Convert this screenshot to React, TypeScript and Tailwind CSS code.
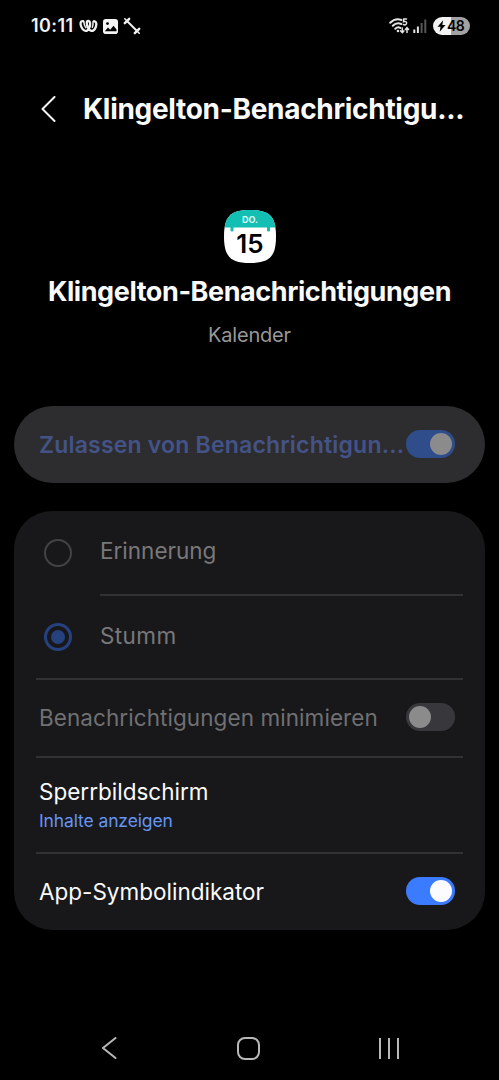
import type { ReactNode } from "react";
import { clsx } from "clsx";

function StatusBar() {
  return (
    <div className="flex h-[52px] items-center justify-between pr-[29px] pl-[31px]">
      <div className="flex items-center">
        <span className="w-[43px] text-[18px] leading-6 font-semibold tracking-[0.4px] whitespace-nowrap text-[#f2f2f2]">
          10:11
        </span>
        <svg width="19" height="14" viewBox="0 0 19 14" className="ml-[5px]" fill="none" stroke="#f0f0f0" strokeLinecap="round" strokeLinejoin="round">
          <path d="M4.200 2.200C1 1.600 1 5.200 2.500 8.200c1.400 2.800 3.800 4.600 5.800 3.300 2.200-1.500 3.200-5.500 2.700-7.900C10.600 1.300 7.600 1.400 7.800 4.300c.2 2.600 1.600 6 3.700 7.200 2.200 1.200 4.300-.7 5.300-3.500.9-2.600.9-5.300-1.700-5.800" strokeWidth="2.300" />
          <path d="M4.800 2.600c.1 2.400.7 4.300 2 6M14 2.600c.2 2.400 0 4-.7 5.700" strokeWidth="1.500" />
        </svg>
        <svg width="15" height="15" viewBox="0 0 15 15" className="ml-[5px]">
          <rect width="15" height="15" rx="2.800" fill="#f4f4f4" />
          <path d="M1.800 12.300 5 8.600l2.200 2.200 3.300-4 3 3.800v1.700Z" fill="#000" />
          <circle cx="4.500" cy="4.600" r="1.400" fill="#000" />
        </svg>
        <svg width="18" height="18" viewBox="0 0 18 18" className="ml-[5px]" fill="none" stroke="#f0f0f0" strokeLinecap="round">
          <path d="m4 4 10 10" strokeWidth="2" />
          <path d="M1.800 6.200 6.200 1.800M11.800 16.200l4.400-4.400" strokeWidth="2.400" />
          <path d="m1.800 1.800 2 2M14.200 14.200l2 2" strokeWidth="1.600" />
        </svg>
      </div>

      <div className="flex items-center">
        <svg width="22" height="18" viewBox="0 0 22 18" fill="none" stroke="#e4e4e4" strokeLinecap="round">
          <path d="M1.200 5.800C4.500 2.400 9 1.700 12.500 3M3.800 8.800c2.500-2.500 5.500-3 8.500-1.800M6.300 11.700c1.500-1.500 3.500-1.700 5-.8" strokeWidth="2" />
          <circle cx="9" cy="14" r="1.300" fill="#e4e4e4" stroke="none" />
          <path d="M17.500 2h-2.700l-.3 2.700c2-.6 3.300 0 3.100 1.600-.1 1.500-1.900 2-3.300 1.200" strokeWidth="1.500" />
          <path d="M13.300 11v4.500m-1.600-1.600 1.600 1.700 1.600-1.700M18 15.500V10.800m-1.600 1.600L18 10.700l1.600 1.700" strokeWidth="1.500" />
        </svg>
        <svg width="14" height="14" viewBox="0 0 14 14" className="ml-[2px]">
          <path d="M.3 10.500h2V14h-2zM3.900 7.500h2V14h-2z" fill="#e4e4e4" />
          <path d="M7.600 4h2v10h-2zM11.300.5h2V14h-2z" fill="#555" />
        </svg>
        <div className="ml-[6px] flex h-[18px] w-[37px] items-center rounded-full bg-linear-to-r from-[#f2f2f2] from-48% to-[#a2a2a2] to-48% pl-[4px]">
          <svg width="9" height="12" viewBox="0 0 9 12">
            <path d="M6.200.3.500 6.800h3L2.700 11.700 8.500 5H5.300Z" fill="#000" />
          </svg>
          <span className="ml-[1px] text-[14px] leading-[18px] font-semibold tracking-[-0.6px] text-black">48</span>
        </div>
      </div>
    </div>
  );
}

function CalendarIcon() {
  return (
    <svg width="52" height="53" viewBox="0 0 52 53">
      <clipPath id="calendar-shape">
        <path d="M26 0C45.500 0 52 6.500 52 26.500S45.500 53 26 53 0 46.500 0 26.500 6.500 0 26 0Z" />
      </clipPath>
      <g clipPath="url(#calendar-shape)">
        <rect width="52" height="53" fill="#fff" />
        <rect width="52" height="17.500" fill="#12bfb2" />
        <rect x="6.500" y="15" width="3" height="6.500" rx="1.300" fill="#12bfb2" />
        <rect x="43" y="15" width="3" height="6.500" rx="1.300" fill="#12bfb2" />
      </g>
      <text x="26" y="13" textAnchor="middle" fontSize="9" fontWeight="700" fill="#dffaf6">
        DO.
      </text>
      <text x="26" y="42.500" textAnchor="middle" fontSize="26" fontWeight="600" fill="#000">
        15
      </text>
    </svg>
  );
}

function Toggle({ on, disabled }: { on?: boolean; disabled?: boolean }) {
  return (
    <div
      className={clsx(
        "mb-0.5 flex h-7 w-[49px] shrink-0 items-center rounded-full px-[3px]",
        on ? "justify-end" : "justify-start",
        on && (disabled ? "bg-[#304d8b]" : "bg-[#3b7bff]"),
        !on && "bg-[#38373c]",
      )}
    >
      <div className={clsx("size-[22px] rounded-full", disabled ? "bg-[#8b8b8b]" : "bg-[#fcfcff]")} />
    </div>
  );
}

function Radio({ checked }: { checked?: boolean }) {
  return (
    <div
      className={clsx(
        "flex size-7 shrink-0 items-center justify-center rounded-full",
        checked ? "border-3 border-[#25427f]" : "border-2 border-[#434345]",
      )}
    >
      {checked && <div className="size-3.5 rounded-full bg-[#25427f]" />}
    </div>
  );
}

function Row({ className, children }: { className?: string; children: ReactNode }) {
  return <div className={clsx("flex items-center", className)}>{children}</div>;
}

function Divider({ inset }: { inset?: boolean }) {
  return <div className={clsx("mr-[22px] h-0.5 bg-[#323234]", inset ? "ml-[86px]" : "ml-[22px]")} />;
}

export default function App() {
  return (
    <div className="flex h-[1080px] w-[499px] flex-col overflow-hidden bg-black font-[Inter,sans-serif] text-[#fafafa]">
      <StatusBar />

      <header className="flex h-[114px] items-center pl-[41px]">
        <svg width="15" height="26" viewBox="0 0 15 26" fill="none" stroke="#f4f4f4" strokeWidth="2" strokeLinecap="round" strokeLinejoin="round">
          <path d="M13.500 1 1.500 13l12 12" />
        </svg>
        <h1 className="ml-[27px] text-[28px] leading-9 font-bold tracking-[-0.3px] whitespace-nowrap">
          Klingelton-Benachrichtigu...
        </h1>
      </header>

      <section className="flex h-[240px] flex-col items-center pt-[44px]">
        <CalendarIcon />
        <h2 className="mt-[11px] text-[27px] leading-9 font-bold tracking-[-0.43px] whitespace-nowrap">
          Klingelton-Benachrichtigungen
        </h2>
        <p className="mt-[11px] text-[20px] leading-7 tracking-[-0.2px] text-[#989898]">Kalender</p>
      </section>

      <div className="mx-[14px] flex h-[77px] items-center rounded-full bg-[#2d2d2f] pr-[30px] pl-[25px]">
        <span className="w-[367px] text-[23px] leading-8 font-semibold tracking-[0.2px] whitespace-nowrap text-[#445387]">
          Zulassen von Benachrichtigun...
        </span>
        <Toggle on disabled />
      </div>

      <div className="mx-[14px] mt-7 h-[419px] rounded-[38px] bg-[#18181a]">
        <Row className="h-[83px] pl-[30px]">
          <Radio />
          <span className="mb-[3px] ml-[28px] text-[22.500px] text-[#78787a]">Erinnerung</span>
        </Row>
        <Divider inset />
        <Row className="h-[82px] pl-[30px]">
          <Radio checked />
          <span className="mb-[3px] ml-[28px] text-[22.500px] tracking-[0.4px] text-[#78787a]">Stumm</span>
        </Row>
        <Divider />
        <Row className="h-[76px] justify-between pr-[30px] pl-[25px]">
          <span className="text-[22.500px] tracking-[0.07px] whitespace-nowrap text-[#707072]">
            Benachrichtigungen minimieren
          </span>
          <Toggle disabled />
        </Row>
        <Divider />
        <div className="flex h-[94px] flex-col justify-center pl-[25px]">
          <span className="text-[22.500px] leading-[30px]">Sperrbildschirm</span>
          <span className="mt-px text-[17.500px] leading-[26px] tracking-[-0.12px] text-[#6594f5]">
            Inhalte anzeigen
          </span>
        </div>
        <Divider />
        <Row className="h-[76px] justify-between pr-[30px] pl-[25px]">
          <span className="text-[22.500px]">App-Symbolindikator</span>
          <Toggle on />
        </Row>
      </div>

      <nav className="mt-[106px] flex h-6 items-center pl-[102px]">
        <svg width="15" height="22" viewBox="0 0 15 22" fill="none" stroke="#b8b8b8" strokeWidth="2" strokeLinecap="round" strokeLinejoin="round">
          <path d="M13.500 1 1 11l12.500 10" />
        </svg>
        <div className="ml-[120px] size-[23px] rounded-[8px] border-2 border-[#b8b8b8]" />
        <div className="ml-[119px] flex w-5 justify-between">
          <div className="h-[21px] w-0.5 bg-[#b8b8b8]" />
          <div className="h-[21px] w-0.5 bg-[#b8b8b8]" />
          <div className="h-[21px] w-0.5 bg-[#b8b8b8]" />
        </div>
      </nav>
    </div>
  );
}
